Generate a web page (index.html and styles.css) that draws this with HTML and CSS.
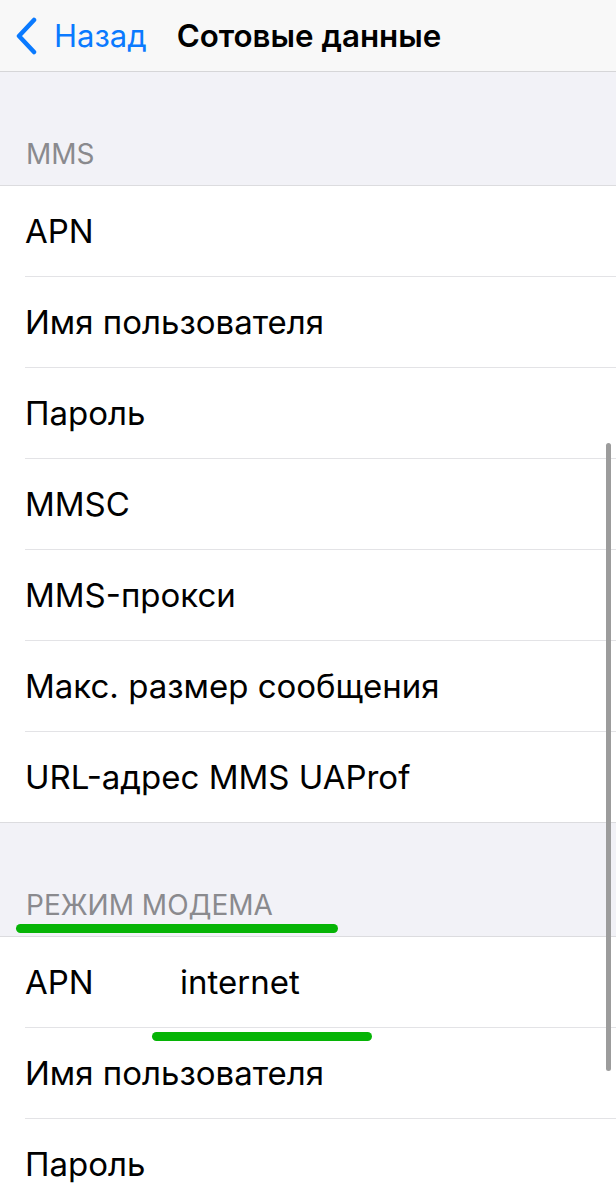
FILE: index.html
```html
<!DOCTYPE html>
<html lang="ru">
<head>
  <meta charset="UTF-8" />
  <meta name="viewport" content="width=device-width, initial-scale=1.0" />
  <title>Сотовые данные</title>
  <link rel="stylesheet" href="styles.css">
</head>
<body>
  <header class="nav">
    <a class="back" href="#">
      <svg class="chevron" width="24" height="38" viewBox="0 0 24 38">
        <path d="M20 3 L5 19 L20 35" fill="none" stroke="#0a7aff" stroke-width="4.5" stroke-linecap="round" stroke-linejoin="round"/>
      </svg>
      <span>Назад</span>
    </a>
    <h1>Сотовые данные</h1>
  </header>

  <main class="content">
    <section class="group">
      <h2 class="group-title">MMS</h2>
      <ul class="list">
        <li>APN</li>
        <li>Имя пользователя</li>
        <li>Пароль</li>
        <li>MMSC</li>
        <li>MMS-прокси</li>
        <li>Макс. размер сообщения</li>
        <li>URL-адрес MMS UAProf</li>
      </ul>
    </section>

    <section class="group">
      <h2 class="group-title"><span class="marked marked-title">РЕЖИМ МОДЕМА</span></h2>
      <ul class="list">
        <li><span class="label">APN</span><span class="value marked marked-value">internet</span></li>
        <li>Имя пользователя</li>
        <li>Пароль</li>
      </ul>
    </section>
  </main>

  <div class="scrollbar"></div>
</body>
</html>
```

FILE: styles.css
```css
body {
  margin: 0;
  height: 1200px;
  overflow: hidden;
  background: #f2f2f7;
  font-family: Inter, "Noto Sans", sans-serif;
  color: #000;
  position: relative;
}
.nav {
  height: 71px;
  display: flex;
  align-items: center;
  background: #f8f8f8;
  border-bottom: 1px solid #d6d6d8;
}
.back {
  display: flex;
  align-items: center;
  gap: 16px;
  padding-left: 14px;
  color: #0a7aff;
  text-decoration: none;
  font-size: 31px;
}
.nav h1 {
  margin: 0 0 0 30px;
  font-size: 31.3px;
  font-weight: 600;
}
.group-title {
  margin: 0;
  height: 113px;
  box-sizing: border-box;
  display: flex;
  align-items: flex-end;
  padding: 0 0 17px 26px;
  font-size: 28px;
  line-height: 28px;
  font-weight: 400;
  color: #8a8a8e;
}
.list {
  list-style: none;
  margin: 0;
  padding: 0;
  background: #fff;
  border-top: 1px solid #dcdcdf;
  border-bottom: 1px solid #dcdcdf;
}
.list li {
  margin-left: 25px;
  line-height: 90px;
  font-size: 33px;
  display: flex;
}
.list li + li {
  border-top: 1px solid #e3e3e6;
}
.label {
  width: 155px;
}
.marked {
  position: relative;
}
.marked::after {
  content: "";
  position: absolute;
  height: 9px;
  border-radius: 5px;
  background: #06b406;
}
.marked-title::after {
  left: -10px;
  right: -65px;
  bottom: -14px;
}
.marked-value::after {
  left: -28px;
  right: -72px;
  bottom: -14px;
}
.scrollbar {
  position: absolute;
  left: 606px;
  top: 443px;
  width: 5px;
  height: 628px;
  border-radius: 3px;
  background: #9c9c9c;
}
```
